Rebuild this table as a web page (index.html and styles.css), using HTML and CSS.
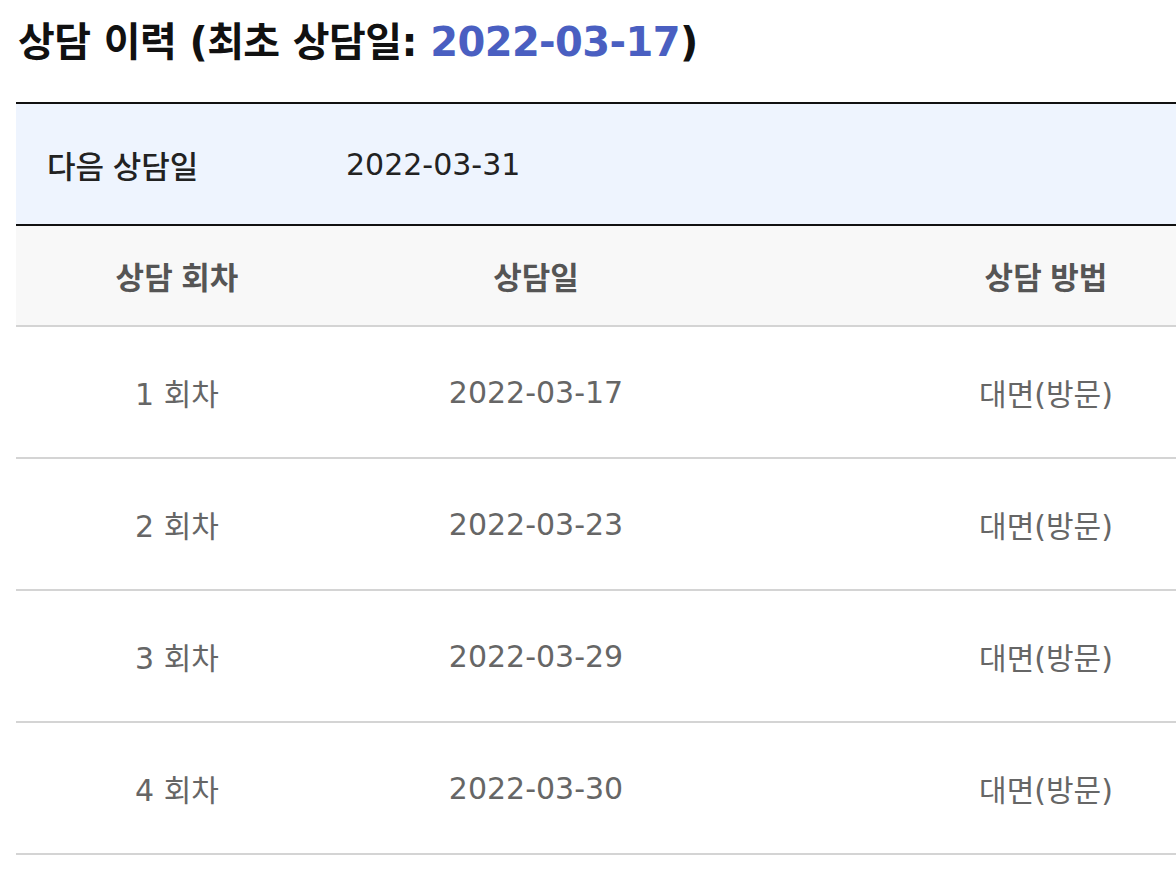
FILE: index.html
```html
<!DOCTYPE html>
<html lang="ko">
<head>
<meta charset="utf-8">
<title>상담 이력</title>
<link rel="stylesheet" href="styles.css">
</head>
<body>
<div class="page">
  <h2 class="title">상담 이력 (최초 상담일: <span class="title-date">2022-03-17</span>)</h2>
  <div class="next">
    <span class="next-label">다음 상담일</span>
    <span class="next-date">2022-03-31</span>
  </div>
  <table class="history">
    <colgroup>
      <col class="c1"><col class="c2"><col class="c3">
    </colgroup>
    <thead>
      <tr><th>상담 회차</th><th>상담일</th><th>상담 방법</th></tr>
    </thead>
    <tbody>
      <tr><td>1 회차</td><td>2022-03-17</td><td>대면(방문)</td></tr>
      <tr><td>2 회차</td><td>2022-03-23</td><td>대면(방문)</td></tr>
      <tr><td>3 회차</td><td>2022-03-29</td><td>대면(방문)</td></tr>
      <tr><td>4 회차</td><td>2022-03-30</td><td>대면(방문)</td></tr>
    </tbody>
  </table>
</div>
</body>
</html>
```
FILE: styles.css
```css
html, body {
  margin: 0;
  padding: 0;
  background: #fff;
  overflow: hidden;
}
body {
  font-family: "DejaVu Sans", "Noto Sans CJK KR", sans-serif;
  color: #222;
}
.page {
  padding: 16px 0 0 16px;
  width: 1342px;
}
.title {
  margin: 0 0 34px 2px;
  font-size: 40px;
  line-height: 52px;
  font-weight: 700;
  color: #111;
  letter-spacing: -0.6px;
}
.title-date {
  color: #4a5fc1;
}
.next {
  display: flex;
  align-items: center;
  height: 120px;
  background: #eef4fe;
  border-top: 2px solid #111;
  border-bottom: 2px solid #111;
  font-size: 30px;
}
.next-label {
  width: 299px;
  padding-left: 31px;
  font-size: 31px;
  font-weight: 500;
  font-family: "Noto Sans CJK KR", sans-serif;
  color: #222;
}
.next-date {
  color: #222;
}
.history {
  width: 1342px;
  table-layout: fixed;
  border-collapse: collapse;
  font-size: 30px;
}
.c1 { width: 322px; }
.c2 { width: 396px; }
.c3 { width: 624px; }
.history th {
  height: 99px;
  padding: 0;
  background: #f8f8f8;
  color: #555;
  font-size: 31px;
  font-weight: 700;
  font-family: "Noto Sans CJK KR", sans-serif;
  border-bottom: 2px solid #d4d4d4;
  text-align: center;
}
.history td {
  height: 130px;
  padding: 0;
  color: #666;
  text-align: center;
  border-bottom: 2px solid #d4d4d4;
}
```
